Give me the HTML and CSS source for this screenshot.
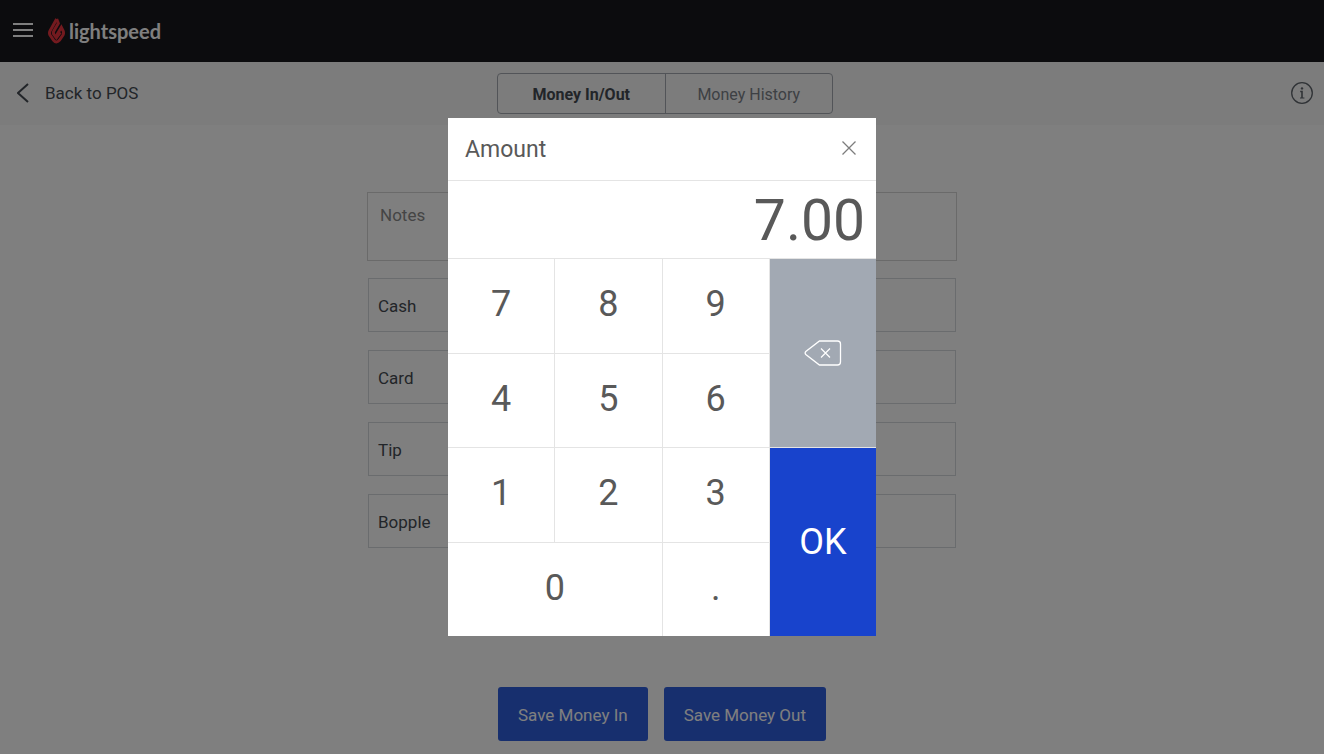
FILE: index.html
```html
<!DOCTYPE html>
<html lang="en">
<head>
  <meta charset="UTF-8">
  <meta name="viewport" content="width=device-width, initial-scale=1.0">
  <title>Money In/Out</title>
  <link rel="stylesheet" href="styles.css">
</head>
<body>
  <header class="topbar">
    <button class="menu-btn" type="button" aria-label="Menu">
      <svg width="20" height="14" viewBox="0 0 20 14"><path d="M0 1h20M0 7h20M0 13h20" stroke="#fff" stroke-width="2"/></svg>
    </button>
    <a class="logo" href="#">
      <svg width="17" height="26" viewBox="0 0 51 78" fill="none" stroke="#e8353f" stroke-width="9">
        <path d="M26 3L6 39Q3 45 6 51L17 67Q25 77 34 67L45 51Q48 45 45 38L40 28L27 50L31 55"/>
        <path d="M26 3L31 16L18 38Q14 45 18 50L25 59L37 43"/>
      </svg>
      <span>lightspeed</span>
    </a>
  </header>

  <nav class="subbar">
    <a class="back" href="#">
      <svg width="12" height="20" viewBox="0 0 12 20"><path d="M11 1L1 10L11 19" fill="none" stroke="#454b52" stroke-width="2"/></svg>
      Back to POS
    </a>
    <div class="tabs">
      <button class="tab active" type="button">Money In/Out</button>
      <button class="tab" type="button">Money History</button>
    </div>
    <button class="info-btn" type="button" aria-label="Info">
      <svg width="22" height="22" viewBox="0 0 22 22">
        <circle cx="11" cy="11" r="10.3" fill="none" stroke="#5f656c" stroke-width="1.3"/>
        <circle cx="11" cy="6.4" r="1.2" fill="#5f656c"/>
        <path d="M9.2 9.5h1.8v6.4" fill="none" stroke="#5f656c" stroke-width="1.6"/>
        <path d="M9 16h4.400" stroke="#5f656c"/>
      </svg>
    </button>
  </nav>

  <main class="content">
    <form class="money-form" id="money-form">
      <textarea class="notes" placeholder="Notes" aria-label="Notes"></textarea>
      <div class="fields">
        <div class="field"><label for="cash">Cash</label><input id="cash" type="text"></div>
        <div class="field"><label for="card">Card</label><input id="card" type="text"></div>
        <div class="field"><label for="tip">Tip</label><input id="tip" type="text"></div>
        <div class="field"><label for="bopple">Bopple</label><input id="bopple" type="text"></div>
      </div>
    </form>
    <div class="actions">
      <button class="save" type="submit" form="money-form">Save Money In</button>
      <button class="save" type="submit" form="money-form">Save Money Out</button>
    </div>
  </main>

  <div class="overlay">
    <section class="keypad" role="dialog" aria-labelledby="keypad-title">
      <div class="keypad-header">
        <h2 id="keypad-title">Amount</h2>
        <button class="close-btn" type="button" aria-label="Close">
          <svg width="14" height="14" viewBox="0 0 14 14"><path d="M.5.5l13 13M13.5.5l-13 13" stroke="#7d7d7d" stroke-width="1.3"/></svg>
        </button>
      </div>
      <output class="amount">7.00</output>
      <div class="keys">
        <button class="key" type="button">7</button>
        <button class="key" type="button">8</button>
        <button class="key" type="button">9</button>
        <button class="key delete" type="button" aria-label="Delete">
          <svg width="38" height="26" viewBox="0 0 38 26" fill="none" stroke="#fff">
            <path d="M15.5 1H33.5Q36.5 1 36.5 4V22Q36.5 25 33.5 25H15.5L1.800 14.5Q.5 13 1.800 11.5Z" stroke-width="1.3"/>
            <path d="M17 8.5l9 9M26 8.5l-9 9" stroke-width="1.2"/>
          </svg>
        </button>
        <button class="key" type="button">4</button>
        <button class="key" type="button">5</button>
        <button class="key" type="button">6</button>
        <button class="key" type="button">1</button>
        <button class="key" type="button">2</button>
        <button class="key" type="button">3</button>
        <button class="key ok" type="button">OK</button>
        <button class="key zero" type="button">0</button>
        <button class="key" type="button">.</button>
      </div>
    </section>
  </div>
</body>
</html>
```
FILE: styles.css
```css
* {
  box-sizing: border-box;
}
body {
  margin: 0;
  min-height: 100vh;
  display: flex;
  flex-direction: column;
  background: #fff;
  color: #454b52;
  font-family: Roboto, sans-serif;
  font-size: 17px;
}
button, input, textarea {
  font: inherit;
  color: inherit;
  background: none;
  border: none;
  border-radius: 0;
  margin: 0;
  padding: 0;
}
button {
  cursor: pointer;
}
a {
  color: inherit;
  text-decoration: none;
}
svg {
  display: block;
}

/* top bars */
.topbar {
  height: 62px;
  padding: 0 13px;
  display: flex;
  align-items: center;
  gap: 15px;
  background: #18181c;
}
.menu-btn, .back, .info-btn {
  padding-bottom: 2px;
}
.logo {
  display: flex;
  align-items: center;
  gap: 4px;
  color: #fff;
  font-family: Lato, sans-serif;
  font-size: 20px;
  font-weight: bold;
}
.subbar {
  height: 63px;
  padding: 0 11px 0 17px;
  display: grid;
  grid-template-columns: 1fr auto 1fr;
  align-items: center;
  background: #f8f8f8;
}
.back {
  display: flex;
  align-items: center;
  gap: 16px;
}
.tabs {
  display: flex;
  width: 336px;
  height: 41px;
  border: 1px solid #a4a9b0;
  border-radius: 4px;
}
.tab {
  flex: 1;
  padding-top: 2px;
  font-size: 16px;
  color: #7b8188;
}
.tab + .tab {
  border-left: 1px solid #a4a9b0;
}
.tab.active {
  color: #454b52;
  font-weight: bold;
}
.info-btn {
  justify-self: end;
}

/* form */
.content {
  flex: 1;
  display: flex;
  flex-direction: column;
  align-items: center;
  justify-content: space-between;
  padding: 67px 16px 14px;
}
.money-form {
  width: 100%;
  max-width: 590px;
  display: flex;
  flex-direction: column;
  gap: 17px;
}
.notes {
  height: 69px;
  padding: 12px;
  border: 1px solid #d4d4d4;
  resize: none;
}
.notes::placeholder {
  color: #8a8a8a;
}
.fields {
  padding: 0 1px;
  display: flex;
  flex-direction: column;
  gap: 18px;
}
.field {
  height: 54px;
  padding: 2px 10px 0 9px;
  display: flex;
  align-items: center;
  gap: 12px;
  border: 1px solid #d4d8dc;
}
.field input {
  flex: 1;
  min-width: 0;
  text-align: right;
}
.actions {
  display: flex;
  gap: 16px;
}
.save {
  height: 54px;
  padding: 2px 20px 0;
  border-radius: 3px;
  background: #2e5edc;
  color: #fff;
}

/* keypad dialog */
.overlay {
  position: fixed;
  inset: 0 0 1px;
  display: flex;
  align-items: center;
  justify-content: center;
  background: rgba(0,0,0,0.5);
}
.keypad {
  width: 428px;
  background: #fff;
  color: #595959;
}
.keypad-header {
  height: 63px;
  padding: 0 20px 2px 17px;
  display: flex;
  align-items: center;
  justify-content: space-between;
  border-bottom: 1px solid #e4e4e4;
}
.keypad-header h2 {
  margin: 0;
  padding-top: 3px;
  font-size: 23px;
  font-weight: normal;
}
.amount {
  height: 78px;
  padding: 2px 11px 0 0;
  display: flex;
  align-items: center;
  justify-content: flex-end;
  border-bottom: 1px solid #e4e4e4;
  font-size: 57px;
}
.keys {
  height: 377px;
  display: grid;
  grid-template-columns: repeat(4, 1fr);
  grid-template-rows: repeat(4, 1fr);
  gap: 1px;
  background: #e4e4e4;
}
.key {
  padding-bottom: 3px;
  background: #fff;
  font-size: 36px;
}
.key.zero {
  grid-column: span 2;
}
.key.delete, .key.ok {
  grid-column: 4;
  grid-row: span 2;
  padding: 0;
  color: #fff;
}
.key.delete {
  display: flex;
  align-items: center;
  justify-content: center;
  background: #a2a9b3;
}
.key.ok {
  background: #1843cc;
}
```
